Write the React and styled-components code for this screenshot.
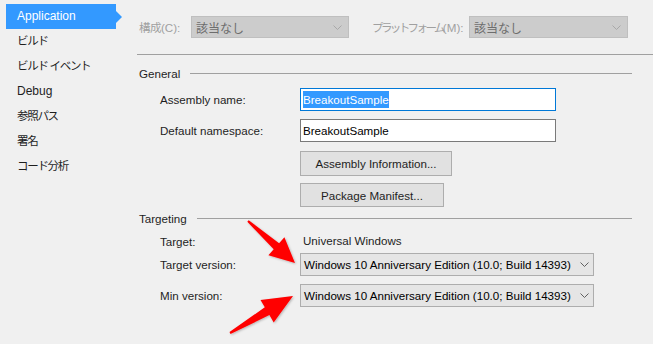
import React from "react";
import styled, { createGlobalStyle } from "styled-components";

const GlobalStyle = createGlobalStyle`
  html, body {
    margin: 0;
    padding: 0;
    background: #f0f0f0;
  }
  body {
    font-family: "Liberation Sans", "Noto Sans CJK JP", sans-serif;
    font-size: 11.6px;
    color: #1e1e1e;
    white-space: nowrap;
  }
`;

const Chevron = ({ color = "#606060" }) => (
  <svg width="9" height="5" viewBox="0 0 9 5">
    <path d="M0.5 0.5 L4.5 4.5 L8.5 0.5" fill="none" stroke={color} strokeWidth="1" />
  </svg>
);

const navItems = [
  { text: "Application" },
  { text: "ビルド", jp: true },
  { text: "ビルド イベント", jp: true },
  { text: "Debug" },
  { text: "参照パス", jp: true },
  { text: "署名", jp: true },
  { text: "コード分析", jp: true },
];

export default function App() {
  return (
    <>
      <GlobalStyle />
      <Page>
        <Sidebar>
          {navItems.map((item, i) => (
            <NavItem key={item.text} $active={i === 0} $jp={item.jp}>
              {item.text}
            </NavItem>
          ))}
        </Sidebar>
        <Main>
          <TopRow>
            <DimLabel $width={52}>
              <Jp $spacing={-0.5}>構成</Jp>(C):
            </DimLabel>
            <DisabledCombo $width={158}>
              該当なし
              <Chevron color="#a8a8a8" />
            </DisabledCombo>
            <DimLabel $width={97} $gap={23}>
              <Jp $spacing={-2.6}>プラットフォーム</Jp>(M):
            </DimLabel>
            <DisabledCombo $width={159}>
              該当なし
              <Chevron color="#a8a8a8" />
            </DisabledCombo>
          </TopRow>
          <Divider />

          <SectionHeader $top={10}>General</SectionHeader>
          <FormRow $top={7}>
            <Label>Assembly name:</Label>
            <TextBox $focused>
              <Selected>BreakoutSample</Selected>
            </TextBox>
          </FormRow>
          <FormRow $top={8}>
            <Label>Default namespace:</Label>
            <TextBox>BreakoutSample</TextBox>
          </FormRow>
          <FormRow $top={9}>
            <span />
            <Button $width={152} $height={25}>Assembly Information...</Button>
          </FormRow>
          <FormRow $top={7}>
            <span />
            <Button $width={144} $height={24}>Package Manifest...</Button>
          </FormRow>

          <SectionHeader $top={3}>Targeting</SectionHeader>
          <FormRow $top={7}>
            <Label>Target:</Label>
            <Value>Universal Windows</Value>
          </FormRow>
          <FormRow $top={4}>
            <Label>Target version:</Label>
            <Combo>
              Windows 10 Anniversary Edition (10.0; Build 14393)
              <Chevron />
            </Combo>
          </FormRow>
          <FormRow $top={8}>
            <Label>Min version:</Label>
            <Combo>
              Windows 10 Anniversary Edition (10.0; Build 14393)
              <Chevron />
            </Combo>
          </FormRow>
        </Main>

        <Arrows width="653" height="344" viewBox="0 0 653 344">
          <defs>
            <filter id="shadow" x="-20%" y="-20%" width="140%" height="140%">
              <feDropShadow dx="1" dy="1" stdDeviation="1" floodColor="#000" floodOpacity="0.25" />
            </filter>
          </defs>
          <polygon
            filter="url(#shadow)"
            fill="#ff0000"
            points="248.7,220.3 279.1,243.3 284.4,237.3 295,263 268.4,255.3 273.7,249.3 247.3,221.7"
          />
          <polygon
            filter="url(#shadow)"
            fill="#ff0000"
            points="229.5,332.1 264.8,307.3 260.5,300 293,296 273.7,322.4 269.4,315.1 230.5,333.9"
          />
        </Arrows>
      </Page>
    </>
  );
}

const Page = styled.div`
  position: relative;
  display: flex;
  width: 653px;
  height: 344px;
  overflow: hidden;
`;

const Sidebar = styled.nav`
  width: 137px;
  flex-shrink: 0;
  padding: 4px 0 0 6px;
  box-sizing: border-box;
  display: flex;
  flex-direction: column;
`;

const NavItem = styled.div`
  position: relative;
  width: 110px;
  height: 25px;
  line-height: 25px;
  padding-left: 11px;
  box-sizing: border-box;
  font-size: ${(p) => (p.$jp ? "11.5px" : "12px")};
  letter-spacing: ${(p) => (p.$jp ? "-1.3px" : "0")};
  color: ${(p) => (p.$active ? "#ffffff" : "#1e1e1e")};
  background: ${(p) => (p.$active ? "#3399ff" : "transparent")};

  &::after {
    content: "";
    display: ${(p) => (p.$active ? "block" : "none")};
    position: absolute;
    left: 110px;
    top: 7px;
    border-top: 6px solid transparent;
    border-bottom: 6px solid transparent;
    border-left: 6px solid #3399ff;
  }
`;

const Main = styled.main`
  flex: 1;
  display: flex;
  flex-direction: column;
`;

const TopRow = styled.div`
  display: flex;
  align-items: center;
  padding: 16px 0 0 2px;
  height: 22px;
  box-sizing: content-box;
`;

const DimLabel = styled.span`
  flex-shrink: 0;
  width: ${(p) => p.$width}px;
  margin-left: ${(p) => p.$gap || 0}px;
  color: #a0a0a0;
`;

const Jp = styled.span`
  font-size: 11.5px;
  letter-spacing: ${(p) => p.$spacing}px;
`;

const DisabledCombo = styled.div`
  flex-shrink: 0;
  width: ${(p) => p.$width}px;
  height: 22px;
  box-sizing: border-box;
  border: 1px solid #bfbfbf;
  background: #cccccc;
  color: #6d6d6d;
  font-size: 12px;
  display: flex;
  align-items: center;
  justify-content: space-between;
  padding: 0 6px 0 4px;
`;

const Divider = styled.div`
  margin-top: 16px;
  height: 1px;
  background: #a0a0a0;
`;

const SectionHeader = styled.div`
  margin-top: ${(p) => p.$top}px;
  margin-right: 21px;
  padding-left: 2px;
  height: 16px;
  display: flex;
  align-items: center;
  gap: 10px;
  color: #1e1e1e;

  &::after {
    content: "";
    flex: 1;
    height: 1px;
    background: #a0a0a0;
  }
`;

const FormRow = styled.div`
  margin-top: ${(p) => p.$top}px;
  padding-left: 23px;
  display: grid;
  grid-template-columns: 140px auto;
  align-items: center;
  justify-items: start;
`;

const Label = styled.span`
  color: #1e1e1e;
`;

const Value = styled.span`
  padding-left: 3px;
  line-height: 16px;
  color: #1e1e1e;
`;

const TextBox = styled.div`
  width: 256px;
  height: 23px;
  box-sizing: border-box;
  border: 1px solid ${(p) => (p.$focused ? "#0078d7" : "#7a7a7a")};
  background: #ffffff;
  display: flex;
  align-items: center;
  padding-left: 2px;
  color: #000;
`;

const Selected = styled.span`
  background: #3399ff;
  color: #ffffff;
  line-height: 17px;
`;

const Button = styled.button`
  width: ${(p) => p.$width}px;
  height: ${(p) => p.$height}px;
  border: 1px solid #adadad;
  background: #e1e1e1;
  font: inherit;
  color: #1e1e1e;
  padding: 0;
`;

const Combo = styled.div`
  width: 294px;
  height: 23px;
  box-sizing: border-box;
  border: 1px solid #adadad;
  background: #e5e5e5;
  display: flex;
  align-items: center;
  justify-content: space-between;
  padding: 0 4px 0 3px;
  color: #000;
`;

const Arrows = styled.svg`
  position: absolute;
  left: 0;
  top: 0;
  pointer-events: none;
`;
